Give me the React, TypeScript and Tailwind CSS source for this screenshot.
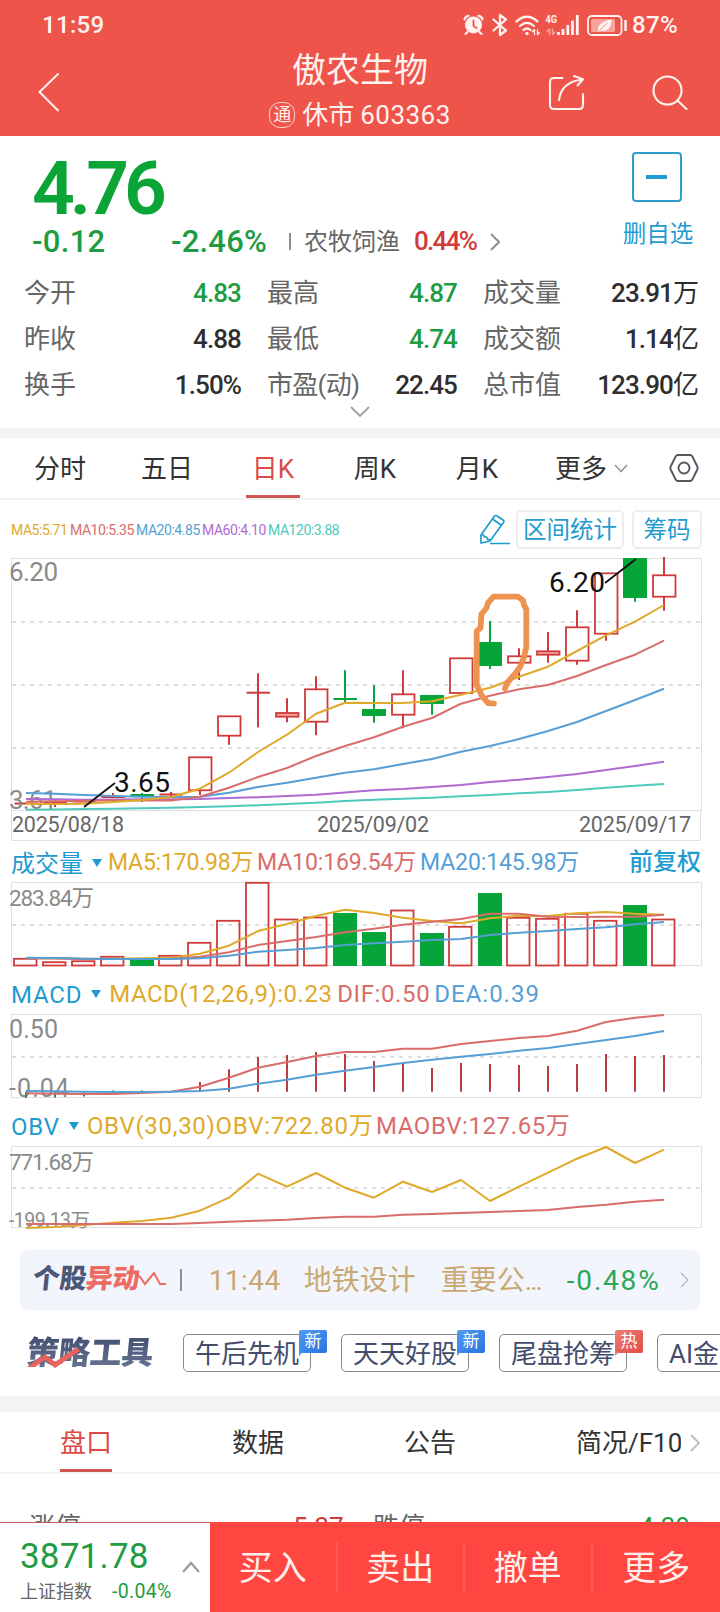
import React from 'react';

const RED = '#d03a3a';
const GREEN = '#05a637';
const YELLOW = '#dfa92a';
const ROSE = '#d96d6b';
const BLUE = '#559fd6';
const PURPLE = '#b06bd3';
const TEAL = '#4ccabb';

const STEP = 29;
const cx = (i: number) => 26 + i * STEP;

interface Candle {
  top: number;
  bottom: number;
  high: number;
  low: number;
  down?: boolean;
}

const c = (top: number, bottom: number, high: number, low: number, down = false): Candle => ({ top, bottom, high, low, down });

const candles: Candle[] = [
  c(803.5, 803.5, 803, 804),
  c(802.7, 802.7, 800, 807),
  c(801.5, 801.5, 801, 802),
  c(797, 797, 793, 798),
  c(795, 795, 793, 802, true),
  c(794.5, 794.5, 792, 796),
  c(757.3, 790.3, 757, 795),
  c(716.3, 735.7, 716, 744.7),
  c(692.7, 692.7, 673.3, 727.3),
  c(713, 716.7, 698.3, 722.3),
  c(689.3, 721.7, 676.3, 735.3),
  c(699, 699, 670.3, 701.7, true),
  c(709, 716, 685.3, 722.7, true),
  c(694.3, 714.7, 670.3, 728.3),
  c(695, 704, 695, 714.7, true),
  c(658.3, 693, 658.3, 693),
  c(642, 666, 621, 669, true),
  c(656.3, 662.7, 648.3, 680),
  c(651.3, 654.7, 632, 662.7),
  c(627.3, 660.7, 610.3, 664.7),
  c(573.3, 633.7, 573.3, 640.7),
  c(558, 598, 558, 601.7, true),
  c(575.3, 596.7, 557, 610.7),
];

const priceLines = [
  { color: TEAL, ys: [809.7, 809.5, 809, 808.7, 808.3, 807.7, 807, 806.3, 805.3, 804, 802.7, 801, 799.7, 798.7, 797.7, 796.2, 795, 793.3, 792, 790, 787.7, 785.8, 784] },
  { color: PURPLE, ys: [799, 799.3, 799.7, 799.6, 799.3, 799.3, 799, 798, 797.3, 796, 794.7, 792.5, 790.3, 789, 787, 785, 782, 779.7, 777, 774, 770, 766, 761.7] },
  { color: BLUE, ys: [793, 793.7, 795, 796, 796.7, 797, 796.7, 792.7, 787, 782.7, 777.7, 772.7, 769.3, 764, 759, 751.7, 746, 739, 731, 722, 711, 700, 688.7] },
  { color: ROSE, ys: [801.7, 801.2, 800.7, 800.5, 800.5, 800.5, 796.7, 787.7, 777, 768, 756, 746, 737.3, 726.7, 718, 703.7, 695.7, 689.3, 685, 676, 665, 654.7, 640.7] },
  { color: YELLOW, ys: [804, 804, 803.7, 802, 800, 797, 788.7, 772.7, 752, 734.7, 713.7, 702.7, 703, 703, 701.3, 694.7, 687.7, 676.7, 666.7, 651, 635.3, 621.7, 605] },
];

const volumes = [958.3, 961.7, 960.7, 956.3, 959, 955.3, 942.3, 920.3, 882.3, 919, 917, 913, 932, 910, 933, 926.3, 893, 917.3, 918.3, 913.3, 920.3, 905, 919];
const volumeDown = [4, 11, 12, 14, 16, 21];

const volumeLines = [
  { color: YELLOW, ys: [958.3, 958.3, 958.7, 958.7, 958.3, 957.7, 953.7, 945.7, 931, 924, 916, 909.7, 913, 917.7, 921, 923.3, 918.3, 915.7, 916, 913.3, 912, 913.7, 914.7] },
  { color: ROSE, ys: [958.3, 958.5, 959, 959, 959, 958.7, 956.7, 952.3, 945, 941, 937, 932.3, 928.7, 924.7, 921.7, 919, 913.7, 913.7, 916.7, 917, 916.7, 916.7, 914.7] },
  { color: BLUE, ys: [957.7, 958, 958.7, 959, 959, 959, 958.3, 955.7, 951.7, 950, 948, 945, 943.3, 941.7, 940, 939, 935, 932.7, 931, 929, 927.3, 924.3, 922] },
];

const macdBars = [1098, 1097.5, 1096.5, 1090.5, 1090.5, 1091.7, 1082, 1069.3, 1057, 1055, 1052, 1054, 1061, 1063.3, 1068, 1063, 1064, 1065, 1066, 1064, 1054, 1056, 1055];
const macdLines = [
  { color: ROSE, ys: [1093.3, 1093.7, 1094, 1094, 1093, 1091.7, 1086.7, 1077.7, 1067.7, 1062, 1056, 1052, 1052, 1048.7, 1048.7, 1044, 1041, 1038, 1036, 1030.7, 1022, 1017.7, 1015] },
  { color: BLUE, ys: [1091, 1091.2, 1091.7, 1092, 1092, 1091.7, 1091, 1088.7, 1083.7, 1079.7, 1074.7, 1070.7, 1067, 1063, 1059.7, 1056.7, 1054, 1050.7, 1048, 1044, 1040, 1036, 1031] },
];

const obvLines = [
  { color: YELLOW, ys: [1228, 1227, 1225, 1222.7, 1221, 1217.7, 1210.7, 1197.7, 1173.7, 1186.7, 1173, 1187.7, 1197.7, 1181.7, 1192, 1180, 1201, 1186.7, 1172.7, 1158.7, 1147, 1163, 1149.7] },
  { color: ROSE, ys: [1224, 1224, 1224, 1224, 1224, 1224, 1223, 1221.7, 1220.7, 1219.7, 1218, 1216.7, 1216.7, 1214.7, 1214, 1213, 1212, 1211, 1210, 1207, 1204.7, 1201.7, 1199.7] },
];

const Lines = ({ lines }: { lines: { color: string; ys: number[] }[] }) => (
  <>
    {lines.map((l, k) => (
      <polyline
        key={k}
        fill="none"
        stroke={l.color}
        strokeWidth={2}
        strokeLinejoin="round"
        points={l.ys.map((y, i) => `${cx(i)},${y}`).join(' ')}
      />
    ))}
  </>
);

const Dash = ({ y }: { y: number }) => (
  <line x1={12} x2={701} y1={y} y2={y} stroke="#dfdfdf" strokeWidth={2} strokeDasharray="4 5" />
);

const Frame = ({ top, bottom }: { top: number; bottom: number }) => (
  <rect x={11.5} y={top} width={690} height={bottom - top} fill="none" stroke="#e0e0e0" />
);

interface LabelProps {
  x: number;
  y: number;
  size: number;
  width: number;
  color?: string;
  children: string;
}

const Label = ({ x, y, size, width, color = '#8a8a8a', children }: LabelProps) => (
  <text x={x} y={y} fontSize={size} textLength={width} fill={color}>{children}</text>
);

const PriceChart = () => (
  <svg className="block w-full h-[294px] shrink-0" viewBox="0 552 720 294">
    <Frame top={558.5} bottom={810.5} />
    <path d="M11.5 810V840.500H700.500V810" fill="none" stroke="#e0e0e0" />
    <Dash y={622} />
    <Dash y={685} />
    <Dash y={748} />
    <Label x={9} y={581} size={26} width={49}>6.20</Label>
    {candles.map((k, i) => {
      const color = k.down ? GREEN : RED;
      const h = k.bottom - k.top;
      return (
        <g key={i} stroke={color} strokeWidth={2}>
          <line x1={cx(i)} x2={cx(i)} y1={k.high} y2={h > 0 ? k.top : k.low} />
          <line x1={cx(i)} x2={cx(i)} y1={k.bottom} y2={k.low} />
          {h === 0 && <line x1={cx(i) - 11.5} x2={cx(i) + 12} y1={k.top} y2={k.top} />}
          {h > 0 && k.down && <rect x={cx(i) - 12} y={k.top} width={24} height={h} fill={color} stroke="none" />}
          {h > 0 && !k.down && (
            <rect x={cx(i) - 11} y={k.top} width={22.5} height={h} fill={h < 4 ? '#f4a5a3' : 'none'} strokeWidth={1.8} />
          )}
        </g>
      );
    })}
    <Label x={9} y={809} size={26} width={48}>3.61</Label>
    <Lines lines={priceLines} />
    <path d="M84 807L115 783M605 583L636 559" stroke="#111" strokeWidth={1.8} />
    <Label x={114} y={792} size={28} width={56} color="#111">3.65</Label>
    <Label x={549} y={592} size={28} width={56} color="#111">6.20</Label>
    <Label x={12} y={832} size={21.500} width={112} color="#666">2025/08/18</Label>
    <Label x={317} y={832} size={21.500} width={112} color="#666">2025/09/02</Label>
    <Label x={579} y={832} size={21.500} width={112} color="#666">2025/09/17</Label>
    {/* freehand mark round the 09/10 candle */}
    <path
      d="M494 703.700L488 703L482 696L476.700 685V631L480.500 628L481.500 614L486.500 608L488 603L493.500 596.700H518L523 600.500L524 605L526.300 609V647L524 657L520 667L514 675L507 683L505 688.500"
      fill="none"
      stroke="#ee924f"
      strokeWidth={5.8}
      strokeLinecap="round"
      strokeLinejoin="round"
    />
  </svg>
);

const VolumeChart = () => (
  <svg className="block w-full h-[88px] shrink-0" viewBox="0 880 720 88">
    <Frame top={882.5} bottom={965.5} />
    <Dash y={925} />
    <Label x={9} y={906} size={22.500} width={85}>283.84万</Label>
    {volumes.map((y, i) =>
      volumeDown.includes(i) ? (
        <rect key={i} x={cx(i) - 12} y={y} width={24} height={966 - y} fill={GREEN} />
      ) : (
        <rect key={i} x={cx(i) - 12} y={y + 0.5} width={22.5} height={965 - y} fill="none" stroke={RED} strokeWidth={1.8} />
      )
    )}
    <Lines lines={volumeLines} />
  </svg>
);

const MacdChart = () => (
  <svg className="block w-full h-[88px] shrink-0" viewBox="0 1012 720 88">
    <Frame top={1014.5} bottom={1097.5} />
    <Dash y={1057} />
    <Label x={9} y={1038} size={25} width={49}>0.50</Label>
    <Label x={9} y={1097} size={25} width={60}>-0.04</Label>
    {macdBars.map((y, i) => (
      <line key={i} x1={cx(i)} x2={cx(i)} y1={1091.7} y2={y} stroke={i < 5 ? '#2f8a3e' : '#bb3c3c'} strokeWidth={2} />
    ))}
    <Lines lines={macdLines} />
  </svg>
);

const ObvChart = () => (
  <svg className="block w-full h-[86px] shrink-0" viewBox="0 1144 720 86">
    <Frame top={1146.5} bottom={1227.5} />
    <Dash y={1188} />
    <Label x={9} y={1170} size={22.500} width={85}>771.68万</Label>
    <Label x={9} y={1227} size={19.500} width={81}>-199.13万</Label>
    <Lines lines={obvLines} />
  </svg>
);

const StatusIcons = () => (
  <svg className="block w-[168px] h-[26px]" viewBox="462 11 168 26" fill="none" stroke="#fff2f0" strokeLinecap="round" strokeLinejoin="round">
    <circle cx="474.500" cy="24" r="8.500" fill="#fff2f0" stroke="none" />
    <path d="M465.500 18.500Q466 15.500 469.500 14.800M483.500 18.500Q483 15.500 479.500 14.800M468.500 31L466.500 33M480.500 31L482.500 33" strokeWidth="2.200" />
    <path d="M474.500 19.500V25L477.500 27" stroke="#ee544a" strokeWidth="1.800" />
    <path d="M494.500 18.500L507 29.500L501 34V14L507 18.500L494.500 29.500" strokeWidth="2.300" />
    <path d="M517.500 20.500Q528 11 538.500 20.500M521 25Q528 18.700 535 25M524.500 29Q528 26 531.500 29" strokeWidth="2.300" />
    <circle cx="528" cy="32.500" r="1.700" fill="#fff2f0" stroke="none" />
    <path d="M535.500 33.500V28.500L533.500 30.500M538.500 29V33.500L540.500 31.500" strokeWidth="1.300" />
    <text x="546.500" y="22" fontSize="10.500" fontWeight="700" fill="#fff2f0" stroke="none" textLength="11.500" lengthAdjust="spacingAndGlyphs">4G</text>
    <path d="M550.500 33.500V28L548 30.500M553.500 28V33.500L556 31" stroke="#f9a39c" strokeWidth="1.500" />
    <path d="M559.500 31V34M564 28V34M568.800 24V34M573.500 19.500V34M578.300 14V34" strokeWidth="2.800" strokeLinecap="butt" />
    <rect x="589" y="15" width="33.500" height="19" rx="4" strokeWidth="1.800" />
    <rect x="592" y="18" width="24" height="13" rx="1.500" fill="#f9a39c" stroke="none" />
    <path d="M599.500 31C597 25 602 20.500 612.500 18.500C613 27 607 31.500 600.500 29.500L599 32Z" fill="#fff2f0" stroke="none" />
    <path d="M601 29L608 22.500" stroke="#f28b83" strokeWidth="1" />
    <path d="M626.500 19V30" strokeWidth="2.500" strokeLinecap="butt" />
  </svg>
);

const Header = () => (
  <header className="h-[136px] shrink-0 bg-[#ee544a] text-[#fff2f0] flex flex-col">
    <div className="h-12 pt-px flex items-center justify-between pl-[42px] pr-[36px]">
      <span className="text-[24px] leading-none font-medium tracking-[0.300px]">11:59</span>
      <div className="flex items-center gap-[3px]">
        <StatusIcons />
        <span className="text-[24px] leading-none font-medium tracking-[0.300px] w-[52px]">87%</span>
      </div>
    </div>
    <div className="h-[88px] flex">
      <div className="w-[240px] pl-9 pt-6">
        <svg className="block w-6 h-10" viewBox="36 72 24 40" fill="none" stroke="currentColor" strokeWidth="2">
          <path d="M58.500 73.500L39.500 92L58.500 111" />
        </svg>
      </div>
      <div className="w-[240px] flex flex-col items-center pt-1">
        <h1 className="text-[34px] leading-[36px] font-normal">傲农生物</h1>
        <div className="flex items-center mt-[13px] text-[26px] leading-[26px]">
          <span className="w-[26px] h-[26px] rounded-[11px] border border-[#fbd0cc] text-[18px] flex items-center justify-center mr-[7px]">通</span>
          <span>休市</span>
          <span className="ml-[6px] mt-px tracking-[0.500px]">603363</span>
        </div>
      </div>
      <div className="w-[240px] pl-[66px] pt-6 flex">
        <svg className="block w-[144px] h-10" viewBox="546 72 144 40" fill="none" stroke="currentColor" strokeWidth="2.100" strokeLinecap="round" strokeLinejoin="round">
          <path d="M562.500 78H554Q550 78 550 82V105Q550 109 554 109H579Q583 109 583 105V94" />
          <path d="M559 100Q561 82 582.500 79.500M574 76L583 79.300L577.500 85.500" />
          <circle cx="667.500" cy="90.500" r="14" />
          <path d="M677.500 100.500L686.500 109" />
        </svg>
      </div>
    </div>
  </header>
);

const stats = [
  { label: '今开', value: '4.83', green: true },
  { label: '最高', value: '4.87', green: true },
  { label: '成交量', value: '23.91', unit: '万' },
  { label: '昨收', value: '4.88' },
  { label: '最低', value: '4.74', green: true },
  { label: '成交额', value: '1.14', unit: '亿' },
  { label: '换手', value: '1.50%' },
  { label: '市盈(动)', value: '22.45' },
  { label: '总市值', value: '123.90', unit: '亿' },
];

const Quote = () => (
  <section className="h-[292px] shrink-0 flex flex-col">
    <div className="h-[134px] flex justify-between pl-8 pr-[26px]">
      <div>
        <div className="text-[75px] leading-[72px] h-[87px] pt-[16px] font-semibold tracking-[-5px] text-[#0ba436]">4.76</div>
        <div className="flex items-center h-[36px] text-[31px] leading-none font-medium text-[#1f9c42] whitespace-nowrap">
          <span className="w-[139px] tracking-[0.300px]">-0.12</span>
          <span className="w-[97px] tracking-[0.200px]">-2.46%</span>
          <span className="w-[2px] h-[17px] bg-[#8f8f8f] ml-[21px] mr-[13px]" />
          <span className="mt-0.5 text-[24px] font-normal text-[#666]">农牧饲渔</span>
          <span className="ml-[14px] w-[63px] text-[26px] tracking-[-1.700px] text-[#d03a38]">0.44%</span>
          <svg className="w-[10px] h-[18px] ml-[13px] mt-0.5" viewBox="0 0 10 18" fill="none" stroke="#8f8f8f" strokeWidth="2">
            <path d="M1 1L9 9L1 17" />
          </svg>
        </div>
      </div>
      <div className="w-[72px] pt-4 flex flex-col items-center text-[#1f9bcf]">
        <div className="w-[50px] h-[50px] ml-[-3px] rounded-[4px] border-2 border-[#2f9dc8] flex items-center justify-center">
          <div className="w-[21px] h-1 bg-[#1f9bcf]" />
        </div>
        <span className="mt-[19px] text-[23.500px] leading-[26px]">删自选</span>
      </div>
    </div>
    <div className="grid grid-cols-[217px_190px_215px] gap-x-[26px] auto-rows-[46px] pl-[24px] text-[26px]">
      {stats.map(s => (
        <div key={s.label} className="flex items-center justify-between leading-none">
          <span className={`text-[#666] ${s.label.includes('(') ? 'tracking-[-0.700px]' : ''}`}>{s.label}</span>
          <span className={`font-medium tracking-[-0.900px] ${s.green ? 'text-[#1f9c42]' : 'text-[#2e2e2e]'}`}>
            {s.value}
            {s.unit && <span className="font-normal">{s.unit}</span>}
          </span>
        </div>
      ))}
    </div>
    <svg className="block w-5 h-3 mx-auto -mt-0.5" viewBox="0 0 20 12" fill="none" stroke="#a0a0a0" strokeWidth="1.800">
      <path d="M1 1L10 10L19 1" />
    </svg>
  </section>
);

const periods = [
  { name: '分时', width: 'w-[120px]' },
  { name: '五日', width: 'w-[94px]' },
  { name: '日K', width: 'w-[118px]', active: true },
  { name: '周K', width: 'w-[86px]' },
  { name: '月K', width: 'w-[118px]' },
];

const PeriodTabs = () => (
  <nav className="h-[62px] shrink-0 border-b-2 border-[#f2f2f2] flex text-[26px] leading-none text-[#333]">
    {periods.map(p => (
      <div key={p.name} className={`${p.width} flex flex-col items-center ${p.active ? 'text-[#dc4a47]' : ''}`}>
        <span className="h-[57px] pt-[5px] flex items-center">{p.name}</span>
        {p.active && <span className="w-[54px] h-[3px] bg-[#cf5553]" />}
      </div>
    ))}
    <div className="flex items-center pl-[19px] h-[57px]">
      <span className="pt-[5px]">更多</span>
      <svg className="w-[14px] h-[9px] ml-[7px] mt-1" viewBox="0 0 14 9" fill="none" stroke="#999" strokeWidth="1.800">
        <path d="M1 1L7 7.500L13 1" />
      </svg>
      <svg className="w-[30px] h-[30px] ml-[41px] mt-[3px]" viewBox="0 0 30 30" fill="none" stroke="#555560" strokeWidth="1.900" strokeLinejoin="round">
        <path d="M9 2H21Q22.500 2 23.200 3.200L28.300 13.500Q29 15 28.300 16.500L23.200 26.800Q22.500 28 21 28H9Q7.500 28 6.800 26.800L1.700 16.500Q1 15 1.700 13.500L6.800 3.200Q7.500 2 9 2Z" />
        <circle cx="15" cy="15" r="5.500" />
      </svg>
    </div>
  </nav>
);

const AverageRow = () => (
  <div className="h-[52px] shrink-0 flex items-center justify-between pl-[11px] pr-[18px]">
    <div className="flex gap-[3px] text-[14px] leading-none mt-[7px] tracking-[-0.450px] whitespace-nowrap">
      <span className="text-[#dfa92a] w-[56px]">MA5:5.71</span>
      <span className="text-[#d96d6b] w-[63px]">MA10:5.35</span>
      <span className="text-[#559fd6] w-[63px]">MA20:4.85</span>
      <span className="text-[#b06bd3] w-[63px]">MA60:4.10</span>
      <span className="text-[#4ccabb]">MA120:3.88</span>
    </div>
    <div className="flex items-center text-[23.500px] leading-none text-[#1f9bcf] mt-[6px]">
      <svg className="w-8 h-8 mr-[5px]" viewBox="480 513 32 32" fill="none" stroke="currentColor" strokeWidth="1.700" strokeLinejoin="round">
        <path d="M482 543V535L495.500 516Q496.500 515 498 516L504 520Q505.500 521 504.500 522.500L491 541L482 543Z" />
        <path d="M493.500 519L502 525M482 535Q484.500 534 485.500 537Q488.500 536.500 488.500 539.500Q491 539 491 541M491 543.500H511" />
      </svg>
      <span className="w-[108px] h-[39px] pt-[3px] rounded-[5px] border-2 border-[#ededed] flex items-center justify-center">区间统计</span>
      <span className="w-[70px] h-[39px] pt-[3px] ml-2 rounded-[5px] border-2 border-[#ededed] flex items-center justify-center">筹码</span>
    </div>
  </div>
);

const IndicatorTitle = ({ latin, children }: { latin?: boolean; children: string }) => (
  <div className={`flex items-center text-[#1f9bcf] mt-[3px] ${latin ? 'mr-2 tracking-[0.800px]' : 'mr-[6px]'}`}>
    <span>{children}</span>
    <span className="ml-[9px] mt-[-2px] border-x-[5px] border-t-8 border-x-transparent border-t-[#1f9bcf]" />
  </div>
);

const News = () => (
  <div className="mt-5 mx-5 h-[60px] pt-0.5 shrink-0 rounded-md bg-[#f2f5fc] flex items-center text-[28px] leading-none text-[#c9a873] whitespace-nowrap">
    <div className="ml-[13px] mt-[-4px] flex items-center text-[27px] font-black tracking-[-0.300px]">
      <span className="-skew-x-6 text-[#4c5878]">个股</span>
      <span className="-skew-x-6 text-[#ee6b63]">异动</span>
      <svg className="w-[30px] h-4 ml-[-3px]" viewBox="0 0 30 16" fill="none" stroke="#ee6b63" strokeWidth="2">
        <path d="M0 4L3 6L8 13L17 2L23 13H29" />
      </svg>
    </div>
    <span className="w-[2px] h-[22px] bg-[#8e8e96] mt-[-2px] ml-[13px]" />
    <span className="ml-[27px] w-[72px] tracking-[0.400px]">11:44</span>
    <span className="ml-[23px]">地铁设计</span>
    <span className="ml-[25px] w-[102px]">
      重要公<span className="tracking-[-2px]">...</span>
    </span>
    <span className="ml-[24px] w-[97px] text-[#2ea65a] tracking-[1.800px]">-0.48%</span>
    <svg className="w-[9px] h-4 ml-[16px] mt-[-2px]" viewBox="0 0 9 16" fill="none" stroke="#bdbdc4" strokeWidth="1.500">
      <path d="M1 1L8 8L1 15" />
    </svg>
  </div>
);

const tools = [
  { name: '午后先机', tag: '新' },
  { name: '天天好股', tag: '新' },
  { name: '尾盘抢筹', tag: '热', hot: true },
  { name: 'AI金股' },
];

const Tools = () => (
  <div className="h-[86px] shrink-0 flex pl-[27px] pt-[24px] overflow-hidden">
    <div className="relative w-[156px] h-[38px] shrink-0 text-[32px] leading-[38px] font-black tracking-[-0.500px] whitespace-nowrap">
      <span className="inline-block -skew-x-6 bg-linear-to-b from-[#404d70] to-[#6c7795] bg-clip-text text-transparent">策略工具</span>
      <svg className="absolute left-0 top-[13px] w-[54px] h-6" viewBox="0 0 54 24">
        <path d="M0 20L18 7L28 15L50 0L53 4L28 21L18 13L8 20Z" fill="#e8635e" />
      </svg>
    </div>
    {tools.map(t => (
      <div key={t.name} className="relative w-[128px] h-[38px] pt-0.5 mr-[30px] shrink-0 rounded-[5px] border border-[#848b96] text-[26px] leading-none text-[#434d6b] flex items-center pl-[11px] whitespace-nowrap">
        {t.name}
        {t.tag && (
          <span className={`absolute left-[115px] top-[-5px] w-7 h-[23px] rounded-[2px] text-[17px] text-white flex items-center justify-center ${t.hot ? 'bg-linear-to-br from-[#f07c73] to-[#de4b48]' : 'bg-linear-to-br from-[#519bee] to-[#2b74e2]'}`}>
            {t.tag}
            <i className={`absolute left-0 top-[22px] border-t-4 border-r-4 border-r-transparent ${t.hot ? 'border-t-[#f07c73]' : 'border-t-[#519bee]'}`} />
          </span>
        )}
      </div>
    ))}
  </div>
);

const DetailTabs = () => (
  <nav className="h-[62px] shrink-0 border-b-2 border-[#f2f2f2] flex text-[26px] leading-none text-[#333]">
    <div className="w-[172px] flex flex-col items-center text-[#dc4a47]">
      <span className="h-[57px] pt-1 flex items-center">盘口</span>
      <span className="w-[52px] h-[3px] bg-[#cf5553]" />
    </div>
    <span className="w-[172px] h-[57px] pt-1 flex items-center justify-center">数据</span>
    <span className="w-[172px] h-[57px] pt-1 flex items-center justify-center">公告</span>
    <div className="h-[57px] pt-1 pl-[60px] flex items-center">
      <span className="w-[105px] overflow-hidden whitespace-nowrap">简况/F10</span>
      <svg className="w-[10px] h-[18px] ml-[9px]" viewBox="0 0 10 18" fill="none" stroke="#bbb" strokeWidth="1.800">
        <path d="M1 1L9 9L1 17" />
      </svg>
    </div>
  </nav>
);

const BottomBar = () => (
  <footer className="h-[90px] shrink-0 flex">
    <div className="w-[210px] border-t border-[#c4605f] flex text-[#1f9c42]">
      <div className="w-[182px] pl-[20px] pt-[16px]">
        <div className="text-[35px] leading-[36px] tracking-[0.200px]">3871.78</div>
        <div className="flex items-center mt-[7px] text-[18px] leading-[20px] whitespace-nowrap">
          <span className="w-[92px] text-[#666]">上证指数</span>
          <span className="text-[19.500px] tracking-[0.300px]">-0.04%</span>
        </div>
      </div>
      <svg className="w-[18px] h-3 mt-[38px]" viewBox="0 0 18 12" fill="none" stroke="#999" strokeWidth="2.200">
        <path d="M1 11L9 2L17 11" />
      </svg>
    </div>
    <div className="flex-1 bg-[#ff4640] grid grid-cols-4 divide-x-2 divide-[#ff5a55] items-center text-[34px] text-[#fff0ee]">
      {['买入', '卖出', '撤单', '更多'].map(a => (
        <button key={a} className="h-[50px] pt-0.5 leading-none">{a}</button>
      ))}
    </div>
  </footer>
);

export default function App() {
  return (
    <div className="w-[720px] h-[1612px] bg-white overflow-hidden flex flex-col font-['Roboto','Noto_Sans_CJK_SC',sans-serif]">
      <Header />
      <Quote />
      <div className="h-[10px] shrink-0 bg-[#f4f4f4]" />
      <PeriodTabs />
      <AverageRow />
      <PriceChart />

      <div className="h-[34px] shrink-0 flex items-center pl-[11px] pr-[19px] pb-[2px] text-[24px] leading-none whitespace-nowrap">
        <IndicatorTitle>成交量</IndicatorTitle>
        <span className="w-[149px] text-[23px] text-[#dfa92a] tracking-[-0.200px]">MA5:170.98万</span>
        <span className="w-[163px] text-[23px] text-[#d96d6b] tracking-[-0.100px]">MA10:169.54万</span>
        <span className="text-[23px] text-[#559fd6] tracking-[-0.100px]">MA20:145.98万</span>
        <span className="ml-auto font-medium text-[#1e9bd0]">前复权</span>
      </div>
      <VolumeChart />

      <div className="h-[44px] shrink-0 flex items-center pl-[11px] pt-[7px] text-[24px] leading-none whitespace-nowrap">
        <IndicatorTitle latin>MACD</IndicatorTitle>
        <span className="w-[228px] text-[#dfa92a] tracking-[0.500px]">MACD(12,26,9):0.23</span>
        <span className="w-[97px] text-[#d96d6b] tracking-[0.600px]">DIF:0.50</span>
        <span className="text-[#559fd6] tracking-[1px]">DEA:0.39</span>
      </div>
      <MacdChart />

      <div className="h-[44px] shrink-0 flex items-center pl-[11px] pt-[7px] text-[24px] leading-none whitespace-nowrap">
        <IndicatorTitle latin>OBV</IndicatorTitle>
        <span className="w-[289px] text-[#dfa92a] tracking-[0.700px]">OBV(30,30)OBV:722.80万</span>
        <span className="text-[#d96d6b] tracking-[0.600px]">MAOBV:127.65万</span>
      </div>
      <ObvChart />

      <News />
      <Tools />
      <div className="h-4 shrink-0 bg-[#f4f4f4]" />
      <DetailTabs />
      <div className="flex-1 min-h-0 overflow-hidden flex pt-[38px] pl-[29px] pr-[30px] text-[26px] leading-[30px] text-[#666]">
        <span className="w-[264px]">涨停</span>
        <span className="w-[80px] text-[#d03a38]">5.37</span>
        <span>跌停</span>
        <span className="ml-auto text-[#1f9c42]">4.39</span>
      </div>
      <BottomBar />
    </div>
  );
}
